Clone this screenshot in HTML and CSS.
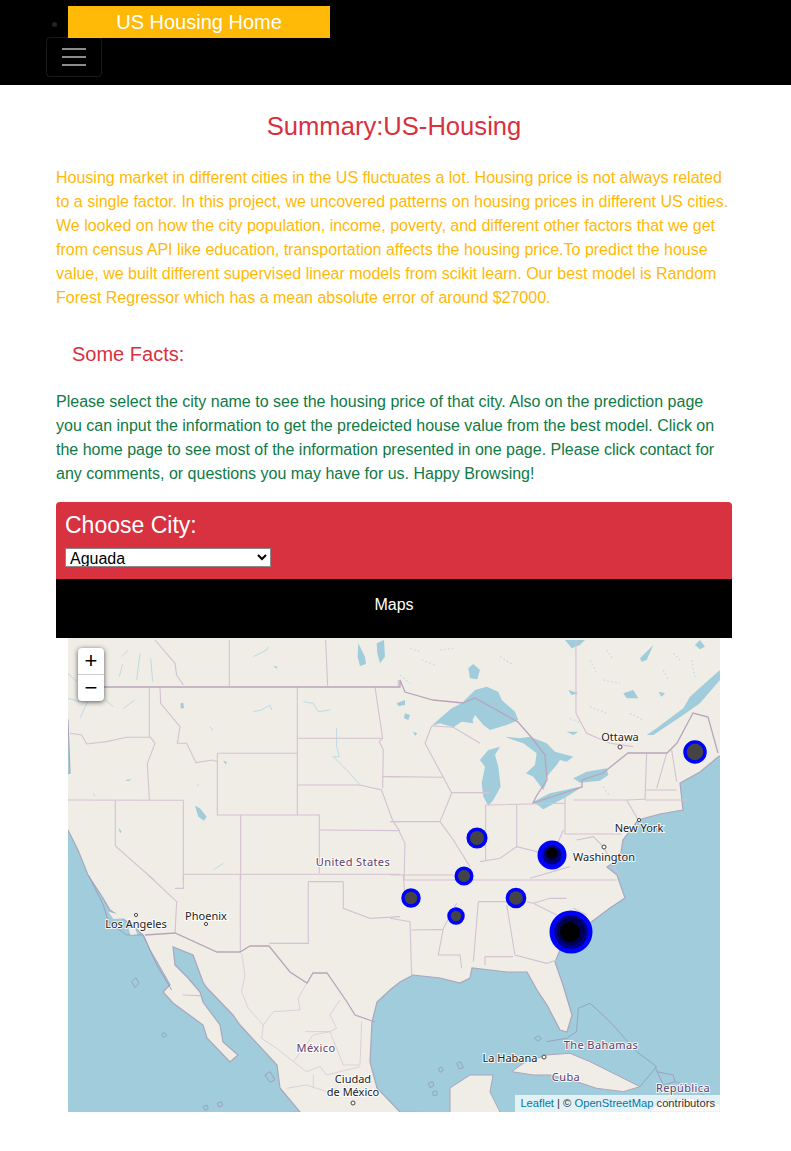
FILE: index.html
```html
<!DOCTYPE html>
<html lang="en">
<head>
    <meta charset="UTF-8">
    <meta name="viewport" content="width=device-width, initial-scale=1.0">
    <title>US Housing</title>
    <link rel="stylesheet" href="styles.css">
</head>
<body>
    <nav class="navbar">
        <ul class="nav-list">
            <li class="nav-item"><a class="brand" href="#">US Housing Home</a></li>
        </ul>
        <button class="toggler" type="button" aria-label="Toggle navigation">
            <span></span><span></span><span></span>
        </button>
    </nav>

    <main class="container">
        <h1 class="title">Summary:US-Housing</h1>
        <p class="summary">Housing market in different cities in the US fluctuates a lot. Housing price is not always related to a single factor. In this project, we uncovered patterns on housing prices in different US cities. We looked on how the city population, income, poverty, and different other factors that we get from census API like education, transportation affects the housing price.To predict the house value, we built different supervised linear models from scikit learn. Our best model is Random Forest Regressor which has a mean absolute error of around $27000.</p>
        <h2 class="facts-title">Some Facts:</h2>
        <p class="facts">Please select the city name to see the housing price of that city. Also on the prediction page you can input the information to get the predeicted house value from the best model. Click on the home page to see most of the information presented in one page. Please click contact for any comments, or questions you may have for us. Happy Browsing!</p>

        <div class="city-card">
            <label class="city-label" for="city">Choose City:</label>
            <select class="city-select" id="city" name="city">
                <option>Aguada</option>
            </select>
        </div>
        <div class="maps-bar">Maps</div>

        <div class="map">
            <svg class="map-svg" viewBox="68 638 652 474" width="652" height="474" role="img" aria-label="Map of the United States">
                <rect class="land" x="68" y="638" width="652" height="474"/>

                <!-- oceans -->
                <path class="ocean" d="M60 720 L68 720 L70 773 L60 775 Z M60 830 L68 830 L78 850 L88 875 L103 898 L110 910 L132 925 L143 935 L150 950 L157 962 L170 985 L163 992 L173 1003 L203 1025 L207 1038 L230 1062 L238 1055 L223 1042 L220 1025 L203 1002 L200 992 L188 978 L175 965 L173 947 L193 955 L203 982 L207 988 L233 1015 L240 1025 L277 1065 L280 1088 L300 1112 L60 1125 Z"/>
                <path class="ocean" d="M730 750 L718 757 L700 772 L680 783 L683 810 L660 814 L638 820 L623 840 L620 858 L607 867 L617 875 L625 898 L610 908 L590 923 L560 950 L555 962 L563 985 L572 1015 L567 1032 L560 1030 L547 1005 L537 990 L527 972 L507 972 L472 968 L470 978 L460 983 L440 978 L413 975 L400 982 L390 990 L377 1002 L372 1022 L370 1062 L377 1088 L400 1112 L730 1120 Z"/>

                <!-- islands and land over the gulf -->
                <path class="shore" d="M450 1120 L450 1088 L470 1075 L493 1075 L490 1092 L500 1112 L500 1120 Z"/>
                <g transform="translate(390 875) scale(.3333)">
                    <path class="shore-fine" d="M365 590 L400 565 L470 540 L540 535 L600 560 L680 600 L750 635 L700 650 L620 640 L560 620 L480 600 L430 600 Z"/>
                    <path class="reef-fine" d="M565 400 L600 385 L660 440 L740 530 L800 575 L750 635 M565 400 L560 470 L530 490 L470 500 M800 590 L850 600 L855 620 L820 630 L795 575 M855 620 L920 640 L960 680"/>
                    <path class="reef-fine" d="M433 490 L445 482 L455 490 L445 498 Z M145 580 L155 576 L160 586 L150 592 Z M200 565 L212 560 L220 578 L208 582 Z M115 625 L128 620 L132 632 L120 638 Z M128 650 L140 648 L142 660 L130 662 Z"/>
                </g>
                <path class="shore" d="M650 1112 L660 1100 L690 1098 L720 1104 L720 1112 Z"/>
                <g transform="translate(60 875) scale(.3333)">
                    <path class="reef-fine" d="M215 320 L228 308 L237 325 L225 338 Z M305 478 L312 472 L320 480 L312 488 Z M615 600 L630 590 L645 615 L630 622 Z M430 695 L440 690 L445 702 L435 706 Z M472 685 L485 680 L488 692 L476 696 Z M85 0 L130 90 L145 140 L200 180 L250 180 L290 270 L335 345"/>
                    <path class="island" d="M145 110 L185 120 L205 130 L160 132 Z M205 158 L225 160 L232 178 L212 180 Z"/>
                </g>

                <!-- lakes -->
                <g transform="translate(390 640) scale(.3333)">
                    <path class="water" d="M125 258 L150 235 L185 205 L215 190 L225 180 L255 150 L290 140 L325 155 L335 180 L375 215 L385 240 L350 255 L300 270 L280 255 L255 225 L248 240 L250 250 L215 245 L190 262 L150 250 Z"/>
                    <path class="water" d="M275 430 L285 380 L270 360 L295 330 L330 320 L315 345 L325 380 L332 440 L310 480 L295 497 L280 470 Z"/>
                    <path class="water" d="M345 290 L390 295 L420 290 L470 310 L495 335 L550 350 L530 365 L510 360 L500 375 L470 410 L468 430 L460 450 L430 410 L408 400 L435 375 L440 340 L400 310 L370 300 Z"/>
                    <path class="water" d="M430 485 L480 460 L580 438 L530 470 L460 508 Z"/>
                    <path class="water" d="M550 415 L590 395 L650 385 L655 405 L630 422 L570 428 Z"/>
                    <path class="water" d="M990 90 L950 125 L900 170 L880 205 L800 265 L770 285 L790 285 L880 225 L930 190 L990 120 Z"/>
                    <path class="water" d="M525 0 L585 0 L570 15 L545 25 Z M235 85 L250 72 L270 90 L262 118 L240 115 Z M20 190 L45 180 L45 195 L25 198 Z M45 220 L60 225 L55 240 L42 235 Z M535 150 L565 160 L545 165 Z M700 160 L730 150 L745 175 L710 175 Z M805 155 L825 160 L815 170 Z M530 275 L565 275 L550 285 Z M750 55 L790 15 L770 60 L755 65 Z M915 15 L930 0 L945 20 L930 28 Z M70 275 L82 280 L75 288 Z"/>
                    <path class="speckle" d="M30 105 L60 130 M60 25 L90 35 M95 60 L135 75 M150 30 L190 25 M330 50 L370 75 M600 60 L620 100 M650 30 L670 60 M640 120 L690 130 M850 40 L870 60 M905 60 L915 110 M820 90 L835 120 M600 200 L650 220 M540 235 L575 250 M720 220 L760 240 M640 440 L660 470"/>
                </g>
                <g transform="translate(60 640) scale(.3333)">
                    <path class="water" d="M895 10 L915 50 L918 72 L900 78 L893 50 Z M950 10 L972 0 L975 50 L960 70 L952 40 Z M405 497 L420 505 L440 530 L432 542 L415 530 Z M362 190 L370 188 L372 205 L362 205 Z M640 78 L652 80 L650 86 Z M195 420 L215 418 L205 424 Z M175 562 L185 575 L180 580 Z M490 362 L500 365 L498 375 Z"/>
                    <path class="river" d="M178 110 L188 72 M230 120 L240 40 M272 55 L278 125 M185 50 L205 30 M580 215 L605 210 L630 195 L635 210 M730 185 L760 190 L775 215 L810 210 M830 265 L830 320 L838 350 L820 350 L870 400 L900 435 M450 260 L458 272 M580 50 L620 30 L625 20 M100 460 L105 470 M410 440 L418 432 M460 690 L490 670"/>
                    <path class="river" d="M24 100 L50 125 M24 175 L60 185 L75 170 M60 235 L85 180 M190 205 L225 180 M135 180 L160 200"/>
                </g>

                <!-- state lines, west -->
                <g class="states" transform="translate(60 640) scale(.3333)">
                    <path d="M285 0 L345 70 L350 105 L370 135"/>
                    <path d="M508 0 L508 138 M797 0 L803 138 M1015 120 L1015 140"/>
                    <path d="M268 140 L268 290 M30 280 L65 285 L80 312 L140 305 L200 292 L272 292 L285 310 L262 370 L268 480"/>
                    <path d="M300 140 L302 190 L360 260 L352 310 L380 310 L408 368 L458 360 L472 365"/>
                    <path d="M472 340 L712 340 M472 340 L472 525 L778 525 L778 700 M712 140 L712 525"/>
                    <path d="M712 295 L968 295 M945 140 L968 295 L958 305 L970 330 L968 445 M712 435 L900 435 L965 450 L990 520 L1000 545 L1020 575"/>
                    <path d="M778 570 L1020 572 M968 410 L1020 410 M1000 545 L1020 545"/>
                    <path d="M542 525 L542 720 M370 703 L1020 703"/>
                    <path d="M24 480 L370 481 M166 481 L166 618 L282 720 M370 481 L370 720"/>
                </g>

                <!-- state lines, east -->
                <g class="states" transform="translate(390 640) scale(.3333)">
                    <path d="M0 410 L160 412 M125 258 L105 310 L160 412 L185 460 L150 545 L190 600 L240 680 M185 458 L300 458"/>
                    <path d="M125 258 L190 262 L270 310 M287 495 L287 660 M287 495 L525 490 M380 495 L380 620"/>
                    <path d="M525 470 L525 582 L695 582 M550 480 L710 480 L765 478 M0 545 L150 545 M28 575 L45 610 L42 720"/>
                    <path d="M270 665 L330 655 L380 620 L440 635 L490 640 L520 570 M560 600 L610 590 L640 620 L690 710"/>
                    <path d="M770 340 L765 478 M830 340 L800 445 M765 450 L860 450 M765 480 L890 480 M845 330 L860 425"/>
                    <path d="M558 0 L558 220 L590 280 L660 310 L730 320"/>
                    <path d="M420 715 L540 680 M0 705 L190 705 M710 480 L745 540"/>
                </g>

                <!-- state lines, south -->
                <g class="states" transform="translate(60 875) scale(.3333)">
                    <path d="M265 0 L350 80 L345 175 M370 0 L370 40 L345 40 M541 0 L541 232 M745 20 L745 205 L628 205 M850 20 L745 20 M850 20 L850 100 L930 130 L1020 125 M368 360 L420 362"/>
                </g>
                <g class="states" transform="translate(390 875) scale(.3333)">
                    <path d="M0 130 L60 140 L65 300 M65 165 L160 163 M200 85 L160 160 L145 240 L210 240 L215 280 M265 80 L250 260 M350 90 L375 240 L470 265 L500 255"/>
                    <path d="M265 80 L350 80 M285 245 L370 245 M285 245 L285 270 M410 80 L430 85 L500 120 M550 100 L590 120 M430 85 L480 70 L530 70 M40 15 L680 15 M40 0 L45 70"/>
                </g>
                <g class="mx-states" transform="translate(60 875) scale(.3333)">
                    <path d="M545 235 L555 300 L545 350 L565 400 L610 450 L640 410 L720 405 L715 370 L740 325"/>
                    <path d="M610 450 L605 490 L650 520 L700 560 L760 480 L810 470 L830 460 L810 420 L840 375"/>
                    <path d="M735 470 L810 470 L850 570 L900 570 L905 440 M700 560 L740 590 L780 575 L800 600 L900 575 M680 640 L740 630 L800 650 L830 640 M760 600 L760 640"/>
                </g>
                <g class="border">
                    <path d="M103 687 L400 687 L400 680 L405 692 L433 700 L463 703 L475 698 L518 722 L532 738 L545 755 L547 780 L537 795 L533 803 L582 787 L582 780 L603 773 L628 753 L667 753 L677 743 L693 713 L708 717 L718 753"/>
                    <path d="M145 935 L175 933 L217 952 L240 952 L250 946 L269 946 L290 972 L307 983 L313 973 L327 973 L347 1002 L355 1015 L375 1022"/>
                </g>

                <!-- labels -->
                <g class="city-dots">
                    <circle cx="620" cy="747" r="2"/>
                    <circle cx="604" cy="847" r="2"/>
                    <circle cx="639" cy="820" r="1.6"/>
                    <circle cx="136" cy="915" r="1.6"/>
                    <circle cx="206" cy="924" r="1.6"/>
                    <circle cx="353" cy="1103" r="2"/>
                    <circle cx="544" cy="1057" r="2"/>
                </g>
                <g class="labels">
                    <text x="620" y="741">Ottawa</text>
                    <text x="639" y="832">New York</text>
                    <text x="604" y="861">Washington</text>
                    <text x="206" y="920">Phoenix</text>
                    <text x="136" y="928">Los Angeles</text>
                    <text x="353" y="1083">Ciudad</text>
                    <text x="353" y="1096">de México</text>
                    <text x="510" y="1062">La Habana</text>
                    <text class="country" x="353" y="866">United States</text>
                    <text class="country" x="316" y="1052">México</text>
                    <text class="country" x="601" y="1049">The Bahamas</text>
                    <text class="country" x="566" y="1081">Cuba</text>
                    <text class="country" x="683" y="1092">República</text>
                </g>

                <!-- city markers -->
                <g class="markers">
                    <circle cx="695" cy="752" r="10"/>
                    <circle cx="477" cy="838" r="8.8"/>
                    <circle cx="464" cy="876" r="7.8"/>
                    <circle cx="411" cy="898" r="8"/>
                    <circle cx="456" cy="916" r="7"/>
                    <circle cx="516" cy="898" r="8.6"/>
                    <circle class="marker-wide" cx="552" cy="855" r="12"/>
                    <circle class="marker-navy" cx="552" cy="854" r="8"/>
                    <circle class="marker-dark" cx="552" cy="853" r="5"/>
                    <circle class="marker-wide" cx="571" cy="932" r="19"/>
                    <circle class="marker-navy" cx="571" cy="931" r="15"/>
                    <circle class="marker-dark" cx="570" cy="932" r="9.5"/>
                </g>
            </svg>

            <div class="zoom-control">
                <a class="zoom-btn" href="#">+</a>
                <a class="zoom-btn" href="#">&#8722;</a>
            </div>
            <div class="attribution"><a href="#">Leaflet</a> | © <a href="#">OpenStreetMap</a> contributors</div>
        </div>
    </main>
</body>
</html>
```

FILE: styles.css
```css
body {
    font-family: "Liberation Sans", Arial, sans-serif;
    margin: 0;
    padding: 0;
    background-color: #fff;
    height: 1151px;
    overflow: hidden;
}

.navbar {
    background-color: #000;
    height: 85px;
    box-sizing: border-box;
    padding: 6px 46px 0;
}

.nav-list {
    margin: 0;
    padding: 0 0 0 22px;
    color: #212529;
    font-size: 16px;
    height: 32px;
}

.brand {
    display: block;
    width: 262px;
    height: 32px;
    line-height: 32px;
    background-color: #ffb907;
    color: #fff;
    font-size: 20px;
    text-align: center;
    text-decoration: none;
}

.toggler {
    display: flex;
    flex-direction: column;
    justify-content: center;
    gap: 6px;
    align-items: center;
    box-sizing: border-box;
    width: 56px;
    height: 40px;
    margin-top: -1px;
    padding: 0;
    background: transparent;
    border: 1px solid rgba(255, 255, 255, 0.1);
    border-radius: 4px;
}

.toggler span {
    display: block;
    width: 24px;
    height: 2px;
    background-color: #8c8c8c;
}

.container {
    width: 676px;
    margin-left: 56px;
}

.title {
    margin: 0;
    padding-top: 26px;
    height: 50px;
    line-height: 30px;
    font-size: 25.6px;
    font-weight: normal;
    color: #d9303f;
    text-align: center;
}

.summary {
    margin: 5px 0 0;
    font-size: 16px;
    line-height: 24px;
    color: #ffb907;
}

.facts-title {
    margin: 32px 0 0 16px;
    font-size: 20px;
    line-height: 24px;
    font-weight: normal;
    color: #d9303f;
}

.facts {
    margin: 24px 0 0;
    font-size: 16px;
    line-height: 24px;
    color: #0f7a45;
}

.city-card {
    margin-top: 16px;
    height: 77px;
    box-sizing: border-box;
    padding: 9px 9px 0;
    background-color: #d83140;
    border-radius: 4px 4px 0 0;
}

.city-label {
    display: block;
    font-size: 23px;
    line-height: 28px;
    color: #fff;
}

.city-select {
    display: block;
    width: 206px;
    height: 19px;
    margin-top: 9px;
    padding: 0;
    font-family: "Liberation Sans", Arial, sans-serif;
    font-size: 16px;
    background-color: #fff;
    color: #000;
    border: 1px solid #8a8a8a;
}

.maps-bar {
    height: 59px;
    line-height: 51px;
    background-color: #000;
    color: #fff;
    font-size: 16px;
    text-align: center;
}

.map {
    position: relative;
    width: 652px;
    height: 474px;
    margin-left: 12px;
    overflow: hidden;
}

.map-svg {
    display: block;
}

.land {
    fill: #f0ede7;
}

.ocean {
    fill: #a0ccdb;
    stroke: #a9a6bd;
    stroke-width: 1.2;
}

.shore {
    fill: #f0ede7;
    stroke: #a9a6bd;
    stroke-width: 1;
}

.shore-fine {
    fill: #f0ede7;
    stroke: #a9a6bd;
    stroke-width: 3;
}

.reef-fine {
    fill: none;
    stroke: #97a3bd;
    stroke-width: 3;
}

.island {
    fill: #f0ede7;
}

.water {
    fill: #a0ccdb;
}

.speckle {
    fill: none;
    stroke: #c3dde5;
    stroke-width: 4;
    stroke-dasharray: 5 7;
}

.river {
    fill: none;
    stroke: #bcdbe5;
    stroke-width: 3;
}

.states {
    fill: none;
    stroke: #d3c2d2;
    stroke-width: 3.3;
}

.mx-states {
    fill: none;
    stroke: #d9cbd6;
    stroke-width: 2.6;
}

.border {
    fill: none;
    stroke: #b8a5bb;
    stroke-width: 1.3;
}

.city-dots circle {
    fill: #fff;
    stroke: #444;
    stroke-width: 1;
}

.labels text {
    font-family: "Noto Sans", sans-serif;
    font-size: 11px;
    text-anchor: middle;
    fill: #222;
    stroke: rgba(255, 255, 255, 0.85);
    stroke-width: 2px;
    paint-order: stroke;
}

.labels .country {
    fill: #5d3d6c;
    letter-spacing: 0.4px;
}

.markers circle {
    fill: #444;
    stroke: #0000ff;
    stroke-width: 3.5;
}

.markers .marker-wide {
    fill: #000064;
    stroke-width: 5;
}

.markers .marker-dark {
    fill: #000;
    stroke: #000;
    stroke-width: 1;
}

.markers .marker-navy {
    fill: #000050;
    stroke: #00008c;
    stroke-width: 2;
}

.zoom-control {
    position: absolute;
    top: 10px;
    left: 10px;
    width: 26px;
    background-color: #fff;
    border-radius: 4px;
    box-shadow: 0 1px 5px rgba(0, 0, 0, 0.65);
}

.zoom-btn {
    display: block;
    height: 26px;
    line-height: 26px;
    color: #000;
    font-size: 22px;
    text-align: center;
    text-decoration: none;
}

.zoom-btn + .zoom-btn {
    border-top: 1px solid #ccc;
}

.attribution {
    position: absolute;
    right: 0;
    bottom: 0;
    height: 17px;
    line-height: 17px;
    padding: 0 5px;
    font-size: 11.2px;
    color: #333;
    background-color: rgba(255, 255, 255, 0.7);
}

.attribution a {
    color: #0078a8;
    text-decoration: none;
}
```
